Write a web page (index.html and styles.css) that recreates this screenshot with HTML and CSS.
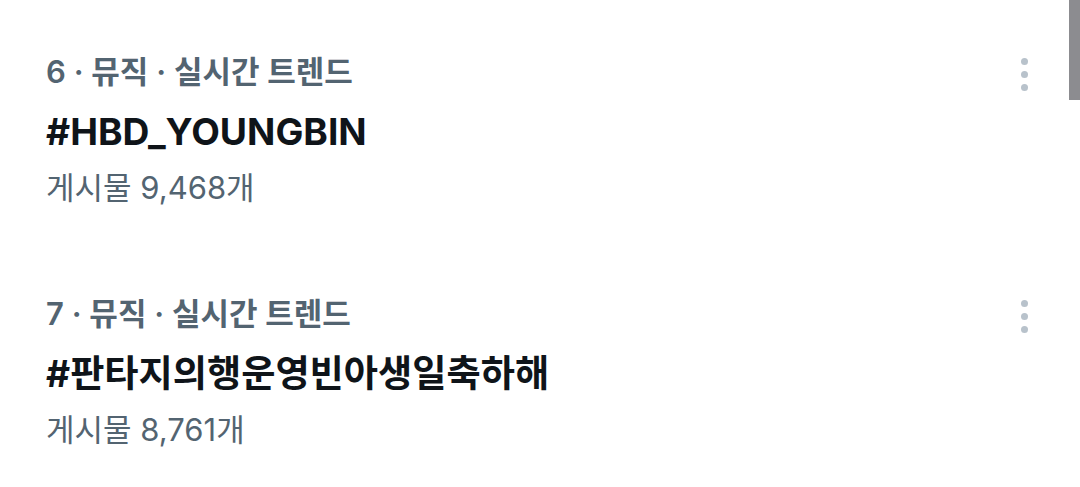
FILE: index.html
```html
<!DOCTYPE html>
<html lang="ko">
<head>
<meta charset="utf-8">
<link rel="stylesheet" href="styles.css">
</head>
<body>
<div class="list">
  <div class="trend">
    <div class="info">
      <div class="meta">6 · 뮤직 · 실시간 트렌드</div>
      <div class="title">#HBD_YOUNGBIN</div>
      <div class="count">게시물 9,468개</div>
    </div>
    <div class="more"><span></span><span></span><span></span></div>
  </div>
  <div class="trend">
    <div class="info">
      <div class="meta">7 · 뮤직 · 실시간 트렌드</div>
      <div class="title">#판타지의행운영빈아생일축하해</div>
      <div class="count">게시물 8,761개</div>
    </div>
    <div class="more"><span></span><span></span><span></span></div>
  </div>
</div>
<div class="scrollbar"></div>
</body>
</html>
```
FILE: styles.css
```css
html, body {
  margin: 0;
  padding: 0;
  background: #ffffff;
}
body {
  width: 1080px;
  height: 487px;
  overflow: hidden;
  font-family: Inter, "Noto Sans CJK KR", sans-serif;
}
.list {
  display: flex;
  flex-direction: column;
}
.trend {
  display: flex;
  justify-content: space-between;
  align-items: flex-start;
  padding: 50px 52px 36px 46px;
}
.info {
  display: flex;
  flex-direction: column;
}
.meta {
  font-size: 31px;
  line-height: 44px;
  font-weight: 600;
  color: #536471;
}
.title {
  font-size: 37.2px;
  line-height: 76px;
  font-weight: 700;
  color: #0f1419;
}
.count {
  font-size: 31px;
  line-height: 36px;
  font-weight: 400;
  color: #536471;
}
.more {
  display: flex;
  flex-direction: column;
  gap: 6px;
  padding-top: 8px;
}
.more span {
  width: 7px;
  height: 7px;
  border-radius: 50%;
  background: #b8c2cb;
}
.scrollbar {
  position: fixed;
  top: 0;
  right: 0;
  width: 11px;
  height: 100px;
  background: #8c8c90;
}
```
